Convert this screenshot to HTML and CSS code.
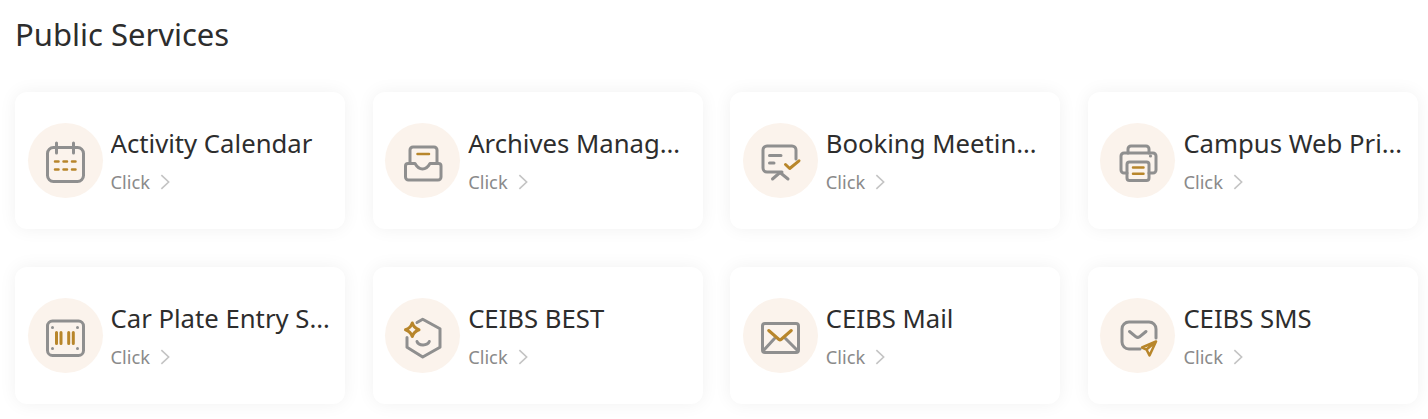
FILE: index.html
```html
<!DOCTYPE html>
<html lang="en">
<head>
    <meta charset="UTF-8">
    <title>Public Services</title>
    <link rel="stylesheet" href="styles.css">
</head>
<body>
    <h1 class="section-title">Public Services</h1>
    <div class="service-grid">
        <a class="service-card">
            <span class="service-icon">
                <svg viewBox="0 0 75 75">
                    <rect class="ln" x="19.5" y="24.5" width="36" height="34" rx="6"/>
                    <path class="ln" d="M28.5 20V30M45.5 20V30"/>
                    <path class="au" d="M27 38.500H30.500M35.500 38.500H39M44 38.500H47.500M27 46.500H30.500M35.500 46.500H39M44 46.500H47.500"/>
                </svg>
            </span>
            <div class="service-text">
                <div class="service-name">Activity Calendar</div>
                <div class="service-link">Click <svg class="chevron" viewBox="0 0 11 17"><path d="M1.5 1L9.5 8.5L1.5 16"/></svg></div>
            </div>
        </a>
        <a class="service-card">
            <span class="service-icon">
                <svg viewBox="0 0 75 75">
                    <path class="ln" d="M25 40V27a3 3 0 0 1 3-3H49a3 3 0 0 1 3 3V40"/>
                    <path class="ln" d="M30 40.5H23a2.500 2.500 0 0 0-2.500 2.500V54a3 3 0 0 0 3 3H53a3 3 0 0 0 3-3V43a2.500 2.500 0 0 0-2.500-2.500H45C43 44 41 46 37.500 46S32 44 30 40.500Z"/>
                    <path class="au" d="M32.500 31H44"/>
                </svg>
            </span>
            <div class="service-text">
                <div class="service-name">Archives Management</div>
                <div class="service-link">Click <svg class="chevron" viewBox="0 0 11 17"><path d="M1.5 1L9.5 8.5L1.5 16"/></svg></div>
            </div>
        </a>
        <a class="service-card">
            <span class="service-icon">
                <svg viewBox="0 0 75 75">
                    <path class="ln" d="M53 36V27a4 4 0 0 0-4-4H24a4 4 0 0 0-4 4V45a4 4 0 0 0 4 4H39"/>
                    <path class="ln" d="M29.500 56L37 49.500L45 56M26.500 32.500H38M26.500 40H31"/>
                    <path class="au bold" d="M42.500 41.500L46.700 45.500L56 37.800"/>
                </svg>
            </span>
            <div class="service-text">
                <div class="service-name">Booking Meeting Room</div>
                <div class="service-link">Click <svg class="chevron" viewBox="0 0 11 17"><path d="M1.5 1L9.5 8.5L1.5 16"/></svg></div>
            </div>
        </a>
        <a class="service-card">
            <span class="service-icon">
                <svg viewBox="0 0 75 75">
                    <path class="ln" d="M28 30V26a3 3 0 0 1 3-3H46a3 3 0 0 1 3 3V30"/>
                    <path class="ln" d="M27 50H24a3 3 0 0 1-3-3V33a3 3 0 0 1 3-3H53a3 3 0 0 1 3 3V47a3 3 0 0 1-3 3H49"/>
                    <rect class="ln" x="27" y="39" width="22" height="18.500" rx="2.500"/>
                    <circle class="dot" cx="50.500" cy="33" r="1.600"/>
                    <path class="au" d="M33 44.500H43.500M33 50.700H43.500"/>
                </svg>
            </span>
            <div class="service-text">
                <div class="service-name">Campus Web Printing</div>
                <div class="service-link">Click <svg class="chevron" viewBox="0 0 11 17"><path d="M1.5 1L9.5 8.5L1.5 16"/></svg></div>
            </div>
        </a>
        <a class="service-card">
            <span class="service-icon">
                <svg viewBox="0 0 75 75">
                    <rect class="ln" x="19.500" y="23" width="36" height="34.500" rx="5"/>
                    <circle class="dot" cx="24.500" cy="29.500" r="1.500"/>
                    <circle class="dot" cx="49.500" cy="29.500" r="1.500"/>
                    <circle class="dot" cx="24.500" cy="50.500" r="1.500"/>
                    <circle class="dot" cx="49.500" cy="50.500" r="1.500"/>
                    <path class="au bold" d="M28.500 34.500V45.500M33 34.500V45.500M40.700 34.500V45.500M45.300 34.500V45.500"/>
                </svg>
            </span>
            <div class="service-text">
                <div class="service-name">Car Plate Entry System</div>
                <div class="service-link">Click <svg class="chevron" viewBox="0 0 11 17"><path d="M1.5 1L9.5 8.5L1.5 16"/></svg></div>
            </div>
        </a>
        <a class="service-card">
            <span class="service-icon">
                <svg viewBox="0 0 75 75">
                    <path class="ln" d="M32 24.500L37.700 21.300L55 30.800V49.300L37.700 59L22 49.300V39.500"/>
                    <path class="ln" d="M32 43.500C33.500 48 42.500 48 44.300 43.500"/>
                    <path class="au bold" d="M27.300 25C28.500 29 30 30.500 34 31.700C30 33 28.500 34.500 27.300 38.500C26 34.500 24.500 33 20.500 31.700C24.500 30.500 26 29 27.300 25Z"/>
                </svg>
            </span>
            <div class="service-text">
                <div class="service-name">CEIBS BEST</div>
                <div class="service-link">Click <svg class="chevron" viewBox="0 0 11 17"><path d="M1.5 1L9.5 8.5L1.5 16"/></svg></div>
            </div>
        </a>
        <a class="service-card">
            <span class="service-icon">
                <svg viewBox="0 0 75 75">
                    <rect class="ln" x="19.500" y="25.500" width="36" height="29" rx="2.500"/>
                    <path class="ln" d="M20.500 52.500L31.500 40.500M54.500 52.500L42.500 40.500"/>
                    <path class="au bold" d="M25.700 32.500L36 41.500Q37 42.300 38 41.500L48.300 32.500"/>
                </svg>
            </span>
            <div class="service-text">
                <div class="service-name">CEIBS Mail</div>
                <div class="service-link">Click <svg class="chevron" viewBox="0 0 11 17"><path d="M1.5 1L9.5 8.5L1.5 16"/></svg></div>
            </div>
        </a>
        <a class="service-card">
            <span class="service-icon">
                <svg viewBox="0 0 75 75">
                    <path class="ln" d="M56 40V31a7 7 0 0 0-7-7H29a7 7 0 0 0-7 7V44a7 7 0 0 0 7 7H40"/>
                    <path class="ln" d="M29.500 33.500L36 38.800Q37.700 40 39.500 38.800L46 33.500"/>
                    <path class="au" d="M56 43.500L42 49.500L46.500 51.500L49.500 57.500ZM46.500 51.500L56 43.500"/>
                </svg>
            </span>
            <div class="service-text">
                <div class="service-name">CEIBS SMS</div>
                <div class="service-link">Click <svg class="chevron" viewBox="0 0 11 17"><path d="M1.5 1L9.5 8.5L1.5 16"/></svg></div>
            </div>
        </a>
    </div>
</body>
</html>
```

FILE: styles.css
```css
body {
    margin: 0;
    padding: 0 10px 15px 15px;
    background-color: white;
    font-family: "Noto Sans", sans-serif;
    color: #2d2d2d;
}
.section-title {
    margin: 0;
    padding-top: 13px;
    height: 92px;
    box-sizing: border-box;
    font-size: 31px;
    line-height: 42px;
    font-weight: 400;
}
.service-grid {
    display: grid;
    grid-template-columns: repeat(4, minmax(0, 1fr));
    gap: 38px 27.5px;
}
.service-card {
    display: flex;
    align-items: center;
    gap: 8px;
    height: 137px;
    padding: 0 12px 0 12.5px;
    box-sizing: border-box;
    background-color: white;
    border-radius: 12px;
    box-shadow: 0 0 18px rgba(0,0,0,0.06);
}
.service-icon {
    flex: none;
    width: 75px;
    height: 75px;
    border-radius: 50%;
    background-color: #fbf3ec;
}
.service-icon svg {
    display: block;
    width: 75px;
    height: 75px;
}
.ln, .au, .dot {
    stroke-linecap: round;
    stroke-linejoin: round;
}
.ln {
    fill: none;
    stroke: #8f8f8f;
    stroke-width: 3;
}
.au {
    fill: none;
    stroke: #b8862b;
    stroke-width: 2.5;
}
.au.bold {
    stroke-width: 3;
}
.dot {
    fill: #8f8f8f;
}
.service-text {
    flex: 1;
    min-width: 0;
    padding-bottom: 1px;
}
.service-name {
    font-size: 25.7px;
    line-height: 36px;
    white-space: nowrap;
    overflow: hidden;
    text-overflow: ellipsis;
}
.service-link {
    display: flex;
    align-items: center;
    gap: 10px;
    margin-top: 7px;
    font-size: 18.3px;
    line-height: 26px;
    color: #8a8a8a;
}
.chevron {
    width: 10px;
    height: 16px;
    fill: none;
    stroke: #c4c4c4;
    stroke-width: 1.8;
}
```
